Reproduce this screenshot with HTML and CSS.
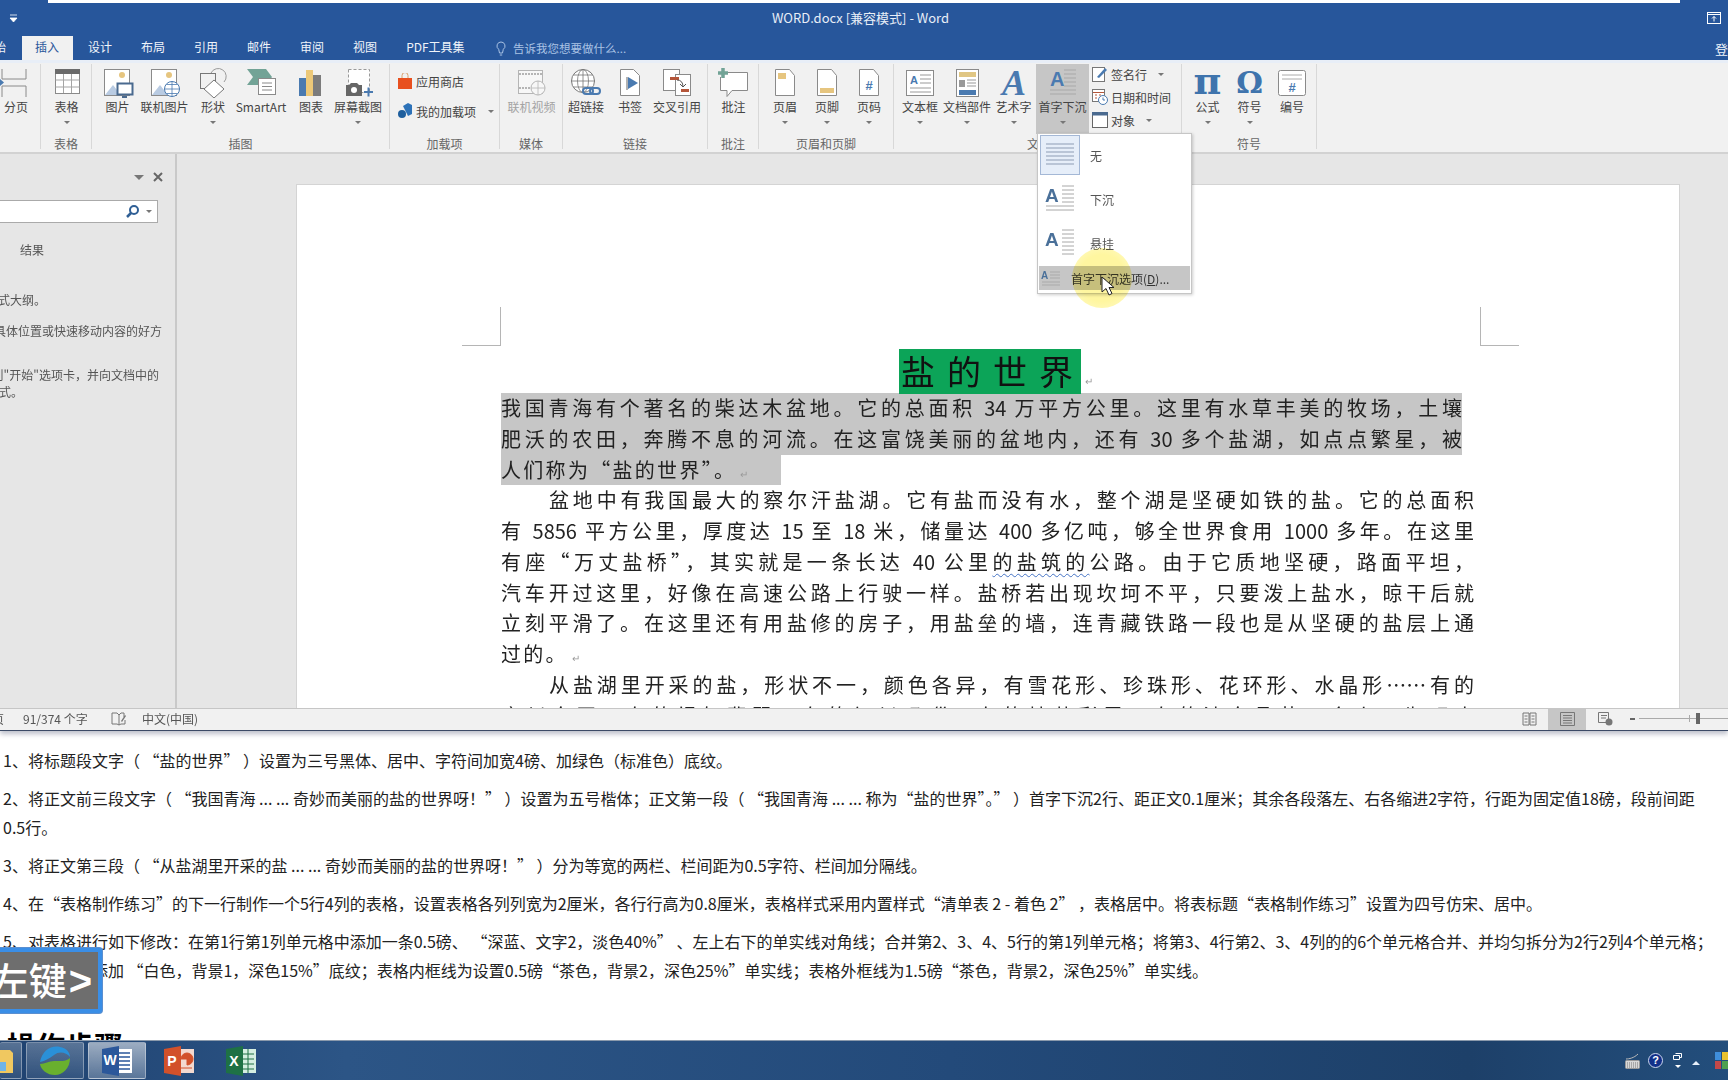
FILE: index.html
```html
<!DOCTYPE html>
<html lang="zh-CN">
<head>
<meta charset="utf-8">
<title>WORD.docx - Word</title>
<link rel="stylesheet" href="styles.css">
</head>
<body>
<div class="screen">
  <section class="word">
    <header class="titlebar">
      <div class="strip"></div>
      <div class="title-row">
        <svg class="qat" width="9" height="9" viewBox="0 0 9 9"><path d="M1 1h7M1 4h7L4.500 8z" fill="#fff" stroke="#fff" stroke-width=".8"/></svg>
        <span class="doc-title">WORD.docx [兼容模式] - Word</span>
        <svg class="restore" width="14" height="12" viewBox="0 0 14 12"><rect x=".5" y=".5" width="13" height="11" fill="none" stroke="#fff"/><path d="M.5 2.500h13" stroke="#fff"/><path d="M7 9.500V4.500M5 6.500l2-2 2 2" fill="none" stroke="#fff"/></svg>
      </div>
      <nav class="tabs">
        <span class="tab tab-first">开始</span>
        <span class="tab tab-active">插入</span>
        <span class="tab">设计</span>
        <span class="tab">布局</span>
        <span class="tab">引用</span>
        <span class="tab">邮件</span>
        <span class="tab">审阅</span>
        <span class="tab">视图</span>
        <span class="tab">PDF工具集</span>
        <span class="tellme">
          <svg width="10" height="15" viewBox="0 0 10 15"><path d="M5 1a4 4 0 0 0-2.300 7.300L3.500 12h3l.800-3.700A4 4 0 0 0 5 1zM3.800 14h2.400" fill="none" stroke="#a9c2e4" stroke-width="1"/></svg>
          告诉我您想要做什么...
        </span>
        <span class="login">登录</span>
      </nav>
    </header>

    <div class="ribbon">
      <div class="group g-pages">
        <div class="items">
          <div class="item w32">
            <svg class="ico" width="32" height="30" viewBox="0 0 32 30"><path d="M2 1v10h24V1M2 29V18h24v11" fill="none" stroke="#8a8a8a"/><path d="M0 11l4 3.500-4 3.500z" fill="#4a7ab0"/></svg>
            <span>分页</span>
          </div>
        </div>
        <div class="group-label"></div>
      </div>
      <div class="group g-table">
        <div class="items">
          <div class="item w51">
            <svg class="ico" width="32" height="30" viewBox="0 0 32 30"><rect x="4.500" y="1.500" width="24" height="24" fill="#fff" stroke="#8a8a8a"/><rect x="4" y="1" width="25" height="5" fill="#6b6b6b"/><path d="M4.500 12h24M4.500 19h24M12.500 6v19M20.500 6v19" stroke="#a5a5a5"/></svg>
            <span>表格</span><i class="arrow"></i>
          </div>
        </div>
        <div class="group-label">表格</div>
      </div>
      <div class="group g-illus">
        <div class="items">
          <div class="item w45">
            <svg class="ico" width="32" height="30" viewBox="0 0 32 30"><rect x="2.500" y="1.500" width="25" height="26" fill="#fff" stroke="#8a8a8a"/><circle cx="20" cy="7" r="3" fill="#e6c57f"/><path d="M3 27l8-10 8 10z" fill="#b9cbe2"/><rect x="15.500" y="15.500" width="15" height="11" fill="#fff" stroke="#4a6a8f" stroke-width="2"/><path d="M20 29h5" stroke="#4a6a8f" stroke-width="2"/></svg>
            <span>图片</span>
          </div>
          <div class="item w49">
            <svg class="ico" width="32" height="30" viewBox="0 0 32 30"><rect x="2.500" y="1.500" width="25" height="26" fill="#fff" stroke="#8a8a8a"/><circle cx="20" cy="7" r="3" fill="#e6c57f"/><path d="M3 27l8-10 8 10z" fill="#b9cbe2"/><circle cx="23" cy="21" r="7.500" fill="#fff" stroke="#4a7ab0"/><path d="M15.500 21h15M23 13.500v15M17.500 16.500h11M17.500 25.500h11" stroke="#4a7ab0" stroke-width=".8"/></svg>
            <span>联机图片</span>
          </div>
          <div class="item w48">
            <svg class="ico" width="32" height="30" viewBox="0 0 32 30"><rect x="3.500" y="5.500" width="15" height="15" fill="none" stroke="#777"/><path d="M14 5a8 8 0 1 1 13 9" fill="none" stroke="#9a9a9a"/><path d="M17 12l10 9-10 9-10-9z" fill="#fff" stroke="#777"/></svg>
            <span>形状</span><i class="arrow"></i>
          </div>
          <div class="item w48">
            <svg class="ico" width="32" height="30" viewBox="0 0 32 30"><path d="M2 1h19l6 8-6 8H2l6-8z" fill="#72a396"/><rect x="13.500" y="10.500" width="17" height="16" fill="#fff" stroke="#8a8a8a"/><path d="M17 15h10M17 18.500h10M17 22h10" stroke="#8a8a8a"/></svg>
            <span>SmartArt</span>
          </div>
          <div class="item w52">
            <svg class="ico" width="32" height="30" viewBox="0 0 32 30"><rect x="4" y="10" width="7" height="18" fill="#4a7ab0"/><rect x="11" y="2" width="7" height="26" fill="#ecc878"/><rect x="18" y="7" width="8" height="21" fill="#7c7c7c"/></svg>
            <span>图表</span>
          </div>
          <div class="item w42">
            <svg class="ico" width="32" height="30" viewBox="0 0 32 30"><rect x="6.500" y="1.500" width="21" height="23" fill="#fff" stroke="#999" stroke-dasharray="3 2"/><path d="M4 17h3l2-2h6l2 2h3v11H4z" fill="#666"/><circle cx="12" cy="22" r="3" fill="#fff"/><path d="M22 24h9M26.500 19.500v9" stroke="#4a7ab0" stroke-width="2"/></svg>
            <span>屏幕截图</span><i class="arrow"></i>
          </div>
        </div>
        <div class="group-label">插图</div>
      </div>
      <div class="group g-addins">
        <div class="items items-col">
          <div class="row-btn"><svg width="14" height="16" viewBox="0 0 14 16"><path d="M0 5h14v11H0z" fill="#e8501f"/><path d="M4 5V2.500a3 3 0 0 1 6 0V5" fill="none" stroke="#d9a06c"/></svg>应用商店</div>
          <div class="row-btn"><svg width="14" height="16" viewBox="0 0 14 16"><path d="M5 3l5-3 4 2v9l-4 2z" fill="#2d72b8"/><circle cx="4" cy="11" r="4" fill="#1f5f9e"/></svg>我的加载项<i class="arrow arrow-inline"></i></div>
        </div>
        <div class="group-label">加载项</div>
      </div>
      <div class="group g-media">
        <div class="items">
          <div class="item item-muted w63">
            <svg class="ico" width="32" height="30" viewBox="0 0 32 30"><rect x="2.500" y="2.500" width="24" height="23" fill="#f7f7f7" stroke="#b5b5b5"/><path d="M3 6h23M3 20h12" stroke="#b5b5b5" stroke-dasharray="2 1" stroke-width="2"/><circle cx="22" cy="20" r="7" fill="#f7f7f7" stroke="#b5b5b5"/><path d="M15 20h14M22 13v14" stroke="#b5b5b5" stroke-width=".8"/></svg>
            <span>联机视频</span>
          </div>
        </div>
        <div class="group-label">媒体</div>
      </div>
      <div class="group g-links">
        <div class="items">
          <div class="item w42">
            <svg class="ico" width="32" height="30" viewBox="0 0 32 30"><circle cx="13" cy="13" r="11.500" fill="#fff" stroke="#777"/><path d="M1.500 13h23M13 1.500v23M3.500 7h19M3.500 19h19" stroke="#777" stroke-width=".8"/><ellipse cx="13" cy="13" rx="5.500" ry="11.500" fill="none" stroke="#777" stroke-width=".8"/><rect x="13" y="20" width="10" height="6" rx="3" fill="none" stroke="#4a7ab0" stroke-width="2"/><rect x="20" y="20" width="10" height="6" rx="3" fill="none" stroke="#4a7ab0" stroke-width="2"/></svg>
            <span>超链接</span>
          </div>
          <div class="item w46">
            <svg class="ico" width="32" height="30" viewBox="0 0 32 30"><path d="M6.500 1.500h13l6 6v20h-19z" fill="#fff" stroke="#8a8a8a"/><path d="M13 9v13" stroke="#666"/><path d="M14 9l10 6-10 6z" fill="#4a7ab0"/></svg>
            <span>书签</span>
          </div>
          <div class="item w48">
            <svg class="ico" width="32" height="30" viewBox="0 0 32 30"><rect x="2.500" y="1.500" width="16" height="21" fill="#fff" stroke="#8a8a8a"/><rect x="14.500" y="6.500" width="15" height="21" fill="#fff" stroke="#8a8a8a"/><rect x="9" y="9" width="9" height="3" fill="#b5563a"/><rect x="20" y="21" width="8" height="3" fill="#b5563a"/><path d="M16 12q6 0 6 7M19 16l3 3 3-3" fill="none" stroke="#555"/></svg>
            <span>交叉引用</span>
          </div>
        </div>
        <div class="group-label">链接</div>
      </div>
      <div class="group g-comment">
        <div class="items">
          <div class="item w51">
            <svg class="ico" width="32" height="30" viewBox="0 0 32 30"><path d="M6.500 4.500h23v18H14l-5 6v-6H2.500V9" fill="#fff" stroke="#8a8a8a"/><path d="M5 0v10M0 5h10" stroke="#72a396" stroke-width="3.500"/></svg>
            <span>批注</span>
          </div>
        </div>
        <div class="group-label">批注</div>
      </div>
      <div class="group g-header">
        <div class="items">
          <div class="item w42">
            <svg class="ico" width="32" height="30" viewBox="0 0 32 30"><path d="M6.500 1.500h14l5 6v20h-19z" fill="#fff" stroke="#8a8a8a"/><rect x="9" y="5" width="8" height="6" fill="#e6c57f"/></svg>
            <span>页眉</span><i class="arrow"></i>
          </div>
          <div class="item w42">
            <svg class="ico" width="32" height="30" viewBox="0 0 32 30"><path d="M6.500 1.500h14l5 6v20h-19z" fill="#fff" stroke="#8a8a8a"/><rect x="9" y="20" width="14" height="5" fill="#e6c57f"/></svg>
            <span>页脚</span><i class="arrow"></i>
          </div>
          <div class="item w42">
            <svg class="ico" width="32" height="30" viewBox="0 0 32 30"><path d="M6.500 1.500h14l5 6v20h-19z" fill="#fff" stroke="#8a8a8a"/><text x="16" y="22" text-anchor="middle" class="svg-hash">#</text></svg>
            <span>页码</span><i class="arrow"></i>
          </div>
        </div>
        <div class="group-label">页眉和页脚</div>
      </div>
      <div class="group g-text">
        <div class="items">
          <div class="item w46">
            <svg class="ico" width="32" height="30" viewBox="0 0 32 30"><rect x="2.500" y="2.500" width="27" height="25" fill="#fff" stroke="#8a8a8a"/><text x="6" y="16" class="svg-a-small">A</text><path d="M16 7h11M16 11h11M16 15h11M6 20h21M6 24h21" stroke="#999"/></svg>
            <span>文本框</span><i class="arrow"></i>
          </div>
          <div class="item w48">
            <svg class="ico" width="32" height="30" viewBox="0 0 32 30"><rect x="5.500" y="1.500" width="22" height="27" fill="#fff" stroke="#8a8a8a"/><rect x="8" y="4" width="17" height="5" fill="#e0c683"/><rect x="8" y="12" width="6" height="7" fill="#999"/><path d="M16 12h9M16 15h9M16 18h9" stroke="#999"/><rect x="8" y="22" width="17" height="5" fill="#4a7ab0"/></svg>
            <span>文档部件</span><i class="arrow"></i>
          </div>
          <div class="item w45">
            <svg class="ico" width="32" height="30" viewBox="0 0 32 30"><text x="16" y="27" text-anchor="middle" class="svg-wordart">A</text></svg>
            <span>艺术字</span><i class="arrow"></i>
          </div>
          <div class="item item-on w53">
            <svg class="ico" width="32" height="30" viewBox="0 0 32 30"><text x="3" y="18" class="svg-a">A</text><path d="M17 2h12M17 6h12M17 10h12M17 14h12M17 18h12M3 22h26M3 26h26" stroke="#a8a8a8"/></svg>
            <span>首字下沉</span><i class="arrow"></i>
          </div>
          <div class="stack">
            <div class="row-btn small"><svg width="16" height="16" viewBox="0 0 16 16"><rect x=".5" y="1.500" width="12" height="14" fill="#fff" stroke="#777"/><path d="M5 11l8-9 2 2-8 8z" fill="#4a7ab0"/></svg>签名行<i class="arrow arrow-inline"></i></div>
            <div class="row-btn small"><svg width="16" height="16" viewBox="0 0 16 16"><rect x=".5" y=".5" width="12" height="12" fill="#fff" stroke="#777"/><path d="M1 3.500h11M3 6h2M7 6h2M3 9h2" stroke="#b5563a"/><circle cx="11" cy="11" r="4.500" fill="#fff" stroke="#4a7ab0"/><path d="M11 8.500V11h2" fill="none" stroke="#4a7ab0"/></svg>日期和时间</div>
            <div class="row-btn small"><svg width="16" height="16" viewBox="0 0 16 16"><rect x=".5" y=".5" width="15" height="15" fill="#fff" stroke="#666"/><rect x="0" y="0" width="16" height="3.500" fill="#4a6a8f"/></svg>对象<i class="arrow arrow-inline"></i></div>
          </div>
        </div>
        <div class="group-label">文本</div>
      </div>
      <div class="group g-symbol">
        <div class="items">
          <div class="item w41">
            <span class="glyph glyph-pi">π</span>
            <span>公式</span><i class="arrow"></i>
          </div>
          <div class="item w43">
            <span class="glyph">Ω</span>
            <span>符号</span><i class="arrow"></i>
          </div>
          <div class="item w42">
            <svg class="ico" width="32" height="30" viewBox="0 0 32 30"><rect x="2.500" y="2.500" width="27" height="25" rx="2" fill="#fff" stroke="#8a8a8a"/><path d="M6 7h20M6 11h20" stroke="#aaa"/><text x="16" y="24" text-anchor="middle" class="svg-hash">#</text></svg>
            <span>编号</span>
          </div>
        </div>
        <div class="group-label">符号</div>
      </div>
    </div>

    <div class="workspace">
      <aside class="nav-pane">
        <div class="nav-head">
          <i class="nav-arrow"></i>
          <svg width="12" height="12" viewBox="0 0 12 12"><path d="M2 2l8 8M10 2l-8 8" stroke="#666" stroke-width="2"/></svg>
        </div>
        <div class="nav-search">
          <svg width="15" height="15" viewBox="0 0 15 15"><circle cx="9" cy="6" r="4" fill="none" stroke="#2f5f95" stroke-width="2"/><path d="M6 9l-4 4" stroke="#2f5f95" stroke-width="2.500"/></svg>
          <i class="nav-arrow nav-arrow-small"></i>
        </div>
        <div class="nav-tab">结果</div>
        <div class="nav-line nav-a">创建交互式大纲。</div>
        <div class="nav-line nav-b">它是跟踪您在文档中的具体位置或快速移动内容的好方</div>
        <div class="nav-line nav-c">要开始，请转到"开始"选项卡，并向文档中的</div>
        <div class="nav-line nav-d">应用标题样式。</div>
      </aside>
      <main class="canvas">
        <article class="page">
          <div class="crops">
            <i class="crop crop-l"></i>
            <i class="crop crop-r"></i>
          </div>
          <div class="page-title"><span class="title-text">盐的世界</span><span class="mark">↵</span></div>
          <div class="line sel">我国青海有个著名的柴达木盆地。它的总面积 34 万平方公里。这里有水草丰美的牧场，土壤</div>
          <div class="line sel">肥沃的农田，奔腾不息的河流。在这富饶美丽的盆地内，还有 30 多个盐湖，如点点繁星，被</div>
          <div class="line-last sel sel-end">人们称为“盐的世界”。<span class="mark">↵</span></div>
          <div class="line wide indent">盆地中有我国最大的察尔汗盐湖。它有盐而没有水，整个湖是坚硬如铁的盐。它的总面积</div>
          <div class="line wide">有 5856 平方公里，厚度达 15 至 18 米，储量达 400 多亿吨，够全世界食用 1000 多年。在这里</div>
          <div class="line wide">有座“万丈盐桥”，其实就是一条长达 40 公里<span class="wavy">的盐筑的</span>公路。由于它质地坚硬，路面平坦，</div>
          <div class="line wide">汽车开过这里，好像在高速公路上行驶一样。盐桥若出现坎坷不平，只要泼上盐水，晾干后就</div>
          <div class="line wide">立刻平滑了。在这里还有用盐修的房子，用盐垒的墙，连青藏铁路一段也是从坚硬的盐层上通</div>
          <div class="line-last">过的。<span class="mark">↵</span></div>
          <div class="line wide indent">从盐湖里开采的盐，形状不一，颜色各异，有雪花形、珍珠形、花环形、水晶形……有的</div>
          <div class="line wide">亮似白玉，有的绿如翡翠，有的红似玛瑙，有的灿若彩霞，有的洁白晶莹，令人叹为观止</div>
        </article>
      </main>
    </div>

    <footer class="statusbar">
      <span class="st-page">页</span>
      <span class="st-count">91/374 个字</span>
      <svg class="st-proof" width="16" height="14" viewBox="0 0 16 14"><path d="M1 1h5l2 2v10l-2-1H1zM8 3l2-2h3v4M8 13l2-1h4V8" fill="none" stroke="#777"/><path d="M10 9l4-6 1 1-4 6z" fill="#777"/></svg>
      <span class="st-lang">中文(中国)</span>
      <div class="views">
        <span class="view">
          <svg width="15" height="14" viewBox="0 0 15 14"><path d="M1 1h6v12H1zM8 1h6v12H8zM2.500 4h3M2.500 7h3M2.500 10h3M9.500 4h3M9.500 7h3M9.500 10h3" fill="none" stroke="#777"/></svg>
        </span>
        <span class="view view-on">
          <svg width="15" height="14" viewBox="0 0 15 14"><path d="M.5.500h14v13H.5zM3 3.500h9M3 6h9M3 8.500h9M3 11h9" fill="none" stroke="#777"/></svg>
        </span>
        <span class="view">
          <svg width="15" height="14" viewBox="0 0 15 14"><path d="M.5.500h10v10H.5zM3 3.500h6M3 6h5" fill="none" stroke="#777"/><circle cx="11" cy="10" r="3.500" fill="#777"/></svg>
        </span>
      </div>
      <div class="zoom">
        <i class="zoom-minus"></i>
        <div class="zoom-track"><i class="zoom-tick"></i><i class="zoom-thumb"></i></div>
      </div>
    </footer>

    <div class="dropdown">
      <div class="dd-item dd-none">
        <span class="dd-thumb dd-thumb-on">
          <svg width="30" height="30" viewBox="0 0 30 30"><path d="M1 4h28M1 8h28M1 12h28M1 16h28M1 20h28M1 24h28" stroke="#8d9cb4"/></svg>
        </span>
        <span>无</span>
      </div>
      <div class="dd-item dd-drop">
        <span class="dd-thumb">
          <svg width="30" height="30" viewBox="0 0 30 30"><text x="0" y="18" class="svg-a-dd">A</text><path d="M17 2h12M17 6h12M17 10h12M17 14h12M17 18h12M1 22h28M1 26h28" stroke="#a8a8a8"/></svg>
        </span>
        <span>下沉</span>
      </div>
      <div class="dd-item dd-hang">
        <span class="dd-thumb">
          <svg width="30" height="30" viewBox="0 0 30 30"><text x="0" y="18" class="svg-a-dd">A</text><path d="M17 2h12M17 6h12M17 10h12M17 14h12M17 18h12M17 22h12M17 26h12" stroke="#a8a8a8"/></svg>
        </span>
        <span>悬挂</span>
      </div>
      <div class="dd-option">
        <svg width="20" height="18" viewBox="0 0 20 18"><text x="0" y="10" class="svg-a-tiny">A</text><path d="M9 3h10M9 6h10M9 9h10M1 13h18M1 16h18" stroke="#aaa"/></svg>
        <span>首字下沉选项(<u>D</u>)...</span>
      </div>
    </div>
    <div class="halo"></div>
    <svg class="cursor" width="14" height="20" viewBox="0 0 14 20"><path d="M1 1v15l4-3.500L8 19l3-1.500-3-6h5z" fill="#fff" stroke="#222"/></svg>
  </section>

  <section class="below">
    <p>1、将标题段文字（ “盐的世界” ）设置为三号黑体、居中、字符间加宽4磅、加绿色（标准色）底纹。</p>
    <p>2、将正文前三段文字（ “我国青海 ... ... 奇妙而美丽的盐的世界呀！” ）设置为五号楷体；正文第一段（ “我国青海 ... ... 称为“盐的世界”。” ）首字下沉2行、距正文0.1厘米；其余各段落左、右各缩进2字符，行距为固定值18磅，段前间距<br>0.5行。</p>
    <p>3、将正文第三段（ “从盐湖里开采的盐 ... ... 奇妙而美丽的盐的世界呀！” ）分为等宽的两栏、栏间距为0.5字符、栏间加分隔线。</p>
    <p>4、在“表格制作练习”的下一行制作一个5行4列的表格，设置表格各列列宽为2厘米，各行行高为0.8厘米，表格样式采用内置样式“清单表 2 - 着色 2” ，表格居中。将表标题“表格制作练习”设置为四号仿宋、居中。</p>
    <p>5、对表格进行如下修改：在第1行第1列单元格中添加一条0.5磅、 “深蓝、文字2，淡色40%” 、左上右下的单实线对角线；合并第2、3、4、5行的第1列单元格；将第3、4行第2、3、4列的的6个单元格合并、并均匀拆分为2行2列4个单元格；<br>将表格第1行添加 “白色，背景1，深色15%”底纹；表格内框线为设置0.5磅“茶色，背景2，深色25%”单实线；表格外框线为1.5磅“茶色，背景2，深色25%”单实线。</p>
    <h2>操作步骤</h2>
    <div class="keycap"><span>左键<b>&gt;</b></span></div>
  </section>

  <footer class="taskbar">
    <div class="tb-btn tb-first">
      <svg width="16" height="26" viewBox="0 0 16 26"><path d="M0 2h10l3 3v20H0z" fill="#f0c860"/><rect x="0" y="14" width="6" height="9" fill="#6fb4e6"/></svg>
    </div>
    <div class="tb-btn">
      <svg width="34" height="32" viewBox="0 0 34 32"><path d="M2 17C4 6 13 0 22 2c6 1 10 5 10 10-4-5-11-6-16-2-4 3-9 6-14 7z" fill="#2a90d8"/><path d="M2 19c5 0 9-3 14-3 6 0 12 1 16-3 0 10-7 17-15 17C9 30 3 25 2 19z" fill="#69b02e"/></svg>
    </div>
    <div class="tb-btn tb-on">
      <svg width="32" height="32" viewBox="0 0 32 32"><rect x="14" y="4" width="17" height="24" fill="#fff"/><path d="M17 8h12M17 12h12M17 16h12M17 20h12M17 24h12" stroke="#2b579a" stroke-width="1.500"/><path d="M1 4l17-3v30L1 28z" fill="#2b579a"/><text x="9" y="20" text-anchor="middle" class="svg-tb">W</text></svg>
    </div>
    <div class="tb-app tb-ppt">
      <svg width="32" height="32" viewBox="0 0 32 32"><rect x="14" y="4" width="17" height="24" fill="#f3d9cf"/><path d="M18 14a6 6 0 1 1 6 6v-6zM18 23h11" fill="#d2512a" stroke="#d2512a"/><path d="M1 4l17-3v30L1 28z" fill="#d2512a"/><text x="9" y="21" text-anchor="middle" class="svg-tb">P</text></svg>
    </div>
    <div class="tb-app tb-xls">
      <svg width="32" height="32" viewBox="0 0 32 32"><rect x="14" y="4" width="17" height="24" fill="#d5efe1"/><path d="M17 9h12M17 14h12M17 19h12M17 24h12M23 4v24" stroke="#1e7145"/><path d="M1 4l17-3v30L1 28z" fill="#1e7145"/><text x="9" y="21" text-anchor="middle" class="svg-tb">X</text></svg>
    </div>
    <div class="tray">
      <svg class="tr-kbd" width="15" height="16" viewBox="0 0 15 16"><path d="M1 6c3 0 8-1 12-5" fill="none" stroke="#bbb"/><rect x=".5" y="7.500" width="14" height="8" rx="1" fill="#d8d8d8" stroke="#999"/><path d="M2 10h11M2 12h11M2 14h11" stroke="#777" stroke-dasharray="1 1"/></svg>
      <span class="tr-help">?</span>
      <span class="tr-restore"><svg width="9" height="7" viewBox="0 0 9 7"><path d="M2.500.500h6v4h-2M.500 2.500h6v4h-6z" fill="none" stroke="#fff"/></svg><i></i></span>
      <i class="tr-up"></i>
      <svg class="tr-flag" width="13" height="18" viewBox="0 0 13 18"><rect x="0" y="0" width="6" height="8" fill="#3f8edb"/><rect x="7" y="0" width="6" height="8" fill="#e8c12e"/><rect x="0" y="9" width="6" height="8" fill="#c44848"/><rect x="7" y="9" width="6" height="8" fill="#4fa04f"/></svg>
    </div>
  </footer>
</div>
</body>
</html>
```
FILE: styles.css
```css
* { box-sizing: border-box; }
html, body { margin: 0; height: 100%; overflow: hidden; }
body { font-family: "Noto Sans CJK SC", "Noto Sans", sans-serif; background: #fff; color: #333; }
.screen { width: 1728px; height: 1080px; display: flex; flex-direction: column; overflow: hidden; position: relative; }

/* Word window */
.word { height: 731px; flex: none; display: flex; flex-direction: column; position: relative; z-index: 2; border-bottom: 1px solid #3b4a66; box-shadow: 0 3px 5px rgba(60,70,100,.35); background: #e6e6e6; }
.titlebar { height: 60px; flex: none; background: #27569b; color: #fff; display: flex; flex-direction: column; overflow: hidden; }
.strip { height: 3px; margin: 0 48px; background: #fff; flex: none; }
.title-row { height: 33px; flex: none; display: flex; align-items: center; position: relative; padding-left: 9px; }
.qat { flex: none; margin-top: -3px; }
.doc-title { margin-left: 754px; font-size: 13px; margin-top: -4px; color: #e8eef7; white-space: nowrap; width: 180px; }
.restore { margin-left: auto; margin-right: 7px; margin-top: -3px; }
.tabs { height: 24px; flex: none; display: flex; align-items: center; font-size: 12px; color: #f0f4fa; }
.tab { padding: 0 14.500px; height: 24px; line-height: 22px; white-space: nowrap; flex: none; }
.tab-first { margin-left: -32.500px; }
.tab-active { background: #f1f1f1; color: #2b579a; padding: 0 13.500px; margin: 0 1px; }
.tellme { flex: 1; display: flex; align-items: center; gap: 7px; color: #a9c2e4; font-size: 11.500px; margin-left: 17px; }
.login { flex: none; margin-right: -13px; font-size: 13px; }

/* Ribbon */
.ribbon { height: 94px; flex: none; background: #f1f1f1; border-top: 3px solid #e8eef7; border-bottom: 2px solid #d2d2d2; display: flex; align-items: stretch; }
.group { flex: none; display: flex; flex-direction: column; position: relative; border-right: 1px solid #d8d8d8; margin: 1px 0 3px; }
.items { flex: none; height: 70px; display: flex; }
.items-col { flex-direction: column; padding: 8px 0 0 8px; gap: 10px; }
.group-label { flex: 1; text-align: center; font-size: 12px; color: #666; line-height: 16px; padding-top: 2px; }
.g-pages { width: 41px; }
.g-table { width: 51px; }
.g-illus { width: 298px; padding-left: 3px; }
.g-illus .group-label { margin-left: -3px; }
.g-addins { width: 110px; }
.g-addins .items-col { padding-top: 7px; }
.g-media { width: 63px; }
.g-links { width: 145px; padding-left: 2px; }
.g-links .group-label { margin-left: -2px; }
.g-comment { width: 51px; }
.g-header { width: 135px; padding-left: 5px; }
.g-header .group-label { margin-left: -5px; }
.g-text { width: 288px; padding-left: 3px; }
.g-symbol { width: 135px; padding-left: 5px; }
.g-symbol .group-label { margin-left: -5px; }

.item { display: flex; flex-direction: column; align-items: center; flex: none; height: 70px; padding-top: 4px; font-size: 12px; color: #444; white-space: nowrap; position: relative; }
.item > span:not(.glyph) { line-height: 16px; margin-top: 1px; }
.ico { flex: none; display: block; }
.w32 { width: 32px; } .w41 { width: 41px; } .w42 { width: 42px; } .w43 { width: 43px; }
.w45 { width: 45px; } .w46 { width: 46px; } .w48 { width: 48px; } .w49 { width: 49px; } .w51 { width: 51px; }
.w52 { width: 52px; } .w53 { width: 53px; } .w63 { width: 63px; }
.item-muted { color: #a3a3a3; }
.item-on { background: #c6c6c6; }
.arrow { display: block; width: 0; height: 0; border-left: 3px solid transparent; border-right: 3px solid transparent; border-top: 3px solid #777; margin-top: 6px; }
.arrow-inline { margin: 0 0 0 8px; }
.row-btn { display: flex; align-items: center; gap: 4px; font-size: 12px; color: #444; white-space: nowrap; height: 20px; }
.row-btn.small { gap: 3px; height: 18px; }
.stack { display: flex; flex-direction: column; gap: 5px; padding: 1px 0 0 3px; }
.glyph { height: 30px; line-height: 30px; font-family: "DejaVu Serif", serif; font-weight: 700; font-size: 30px; color: #3f74ad; flex: none; }
.glyph-pi { font-size: 38px; line-height: 26px; }
.svg-hash { font: 700 13px "Liberation Sans", sans-serif; fill: #4a7ab0; }
.svg-a-small { font: 700 11px "Liberation Sans", sans-serif; fill: #4a7ab0; }
.svg-a { font: 700 20px "Liberation Sans", sans-serif; fill: #4a7ab0; }
.svg-a-dd { font: 700 19px "Liberation Sans", sans-serif; fill: #4a7099; }
.svg-a-tiny { font: 700 10px "Liberation Sans", sans-serif; fill: #4a7099; }
.svg-wordart { font: italic 700 36px "Liberation Serif", serif; fill: #4a7ab0; }
.svg-tb { font: 700 14px "Liberation Sans", sans-serif; fill: #fff; }

/* Workspace */
.workspace { flex: 1; min-height: 0; display: flex; overflow: hidden; }
.nav-pane { width: 177px; flex: none; background: #e6e6e6; border-right: 2px solid #c9c9c9; font-size: 12px; color: #555; }
.nav-head { display: flex; align-items: center; justify-content: flex-end; gap: 8px; padding: 0 11px 0 0; height: 46px; }
.nav-arrow { display: block; width: 0; height: 0; border-left: 5px solid transparent; border-right: 5px solid transparent; border-top: 5px solid #777; }
.nav-arrow-small { border-width: 3px 3px 0; }
.nav-search { width: 158px; height: 23px; background: #fff; border: 1px solid #aaa; border-left: 0; display: flex; align-items: center; justify-content: flex-end; gap: 6px; padding-right: 5px; }
.nav-tab { padding-left: 20px; height: 16px; line-height: 16px; margin-top: 19px; }
.nav-line { display: flex; justify-content: flex-end; width: 162px; white-space: nowrap; height: 18px; line-height: 18px; }
.nav-a { width: 46px; margin-top: 33px; }
.nav-b { margin-top: 13px; }
.nav-c { width: 159px; margin-top: 26px; }
.nav-d { width: 23px; margin-top: -1px; }
.canvas { flex: 1; min-width: 0; padding: 30px 48px 0 119px; overflow: hidden; }
.page { width: 1384px; height: 560px; background: #fff; border: 1px solid #d4d4d4; border-bottom: 0; padding: 0 205px 0 204px; font-size: 20px; color: #222; overflow: hidden; }
.crops { display: flex; justify-content: space-between; width: 1057px; margin: 122px 0 2px -39px; }
.crop { display: block; width: 39px; height: 39px; border-bottom: 1px solid #b5b5b5; }
.crop-l { border-right: 1px solid #b5b5b5; }
.crop-r { border-left: 1px solid #b5b5b5; }
.page-title { width: 976px; height: 45px; text-align: center; line-height: 45px; font-size: 34px; padding-left: 14px; position: relative; }
.title-text { display: inline-block; width: 182px; height: 45px; background: #0ca458; color: #111; letter-spacing: 12px; padding-left: 2px; white-space: nowrap; line-height: 44px; text-align: left; }
.mark { font-size: 10px; color: #999; margin-left: 4px; letter-spacing: 0; }
.line, .line-last { height: 30.750px; line-height: 30.750px; white-space: nowrap; }
.line { width: 961px; text-align: justify; text-align-last: justify; }
.line.wide { width: 973px; }
.indent { padding-left: 48px; }
.line-last { width: 973px; letter-spacing: 2.300px; }
.sel { background: #c6c6c6; }
.sel-end { width: 280px; }
.wavy { text-decoration: underline wavy #4472c4 1px; text-underline-offset: 3px; }

/* Status bar */
.statusbar { height: 22px; flex: none; background: #f1f1f1; border-top: 1px solid #c6c6c6; display: flex; align-items: center; font-size: 12px; color: #555; position: relative; padding-bottom: 2px; }
.st-page { margin-left: -8px; width: 31px; flex: none; }
.st-count { width: 88px; flex: none; }
.st-proof { flex: none; }
.st-lang { margin-left: 15px; }
.views { margin-left: auto; display: flex; align-items: stretch; height: 21px; margin-bottom: -2px; }
.view { width: 38px; display: flex; align-items: center; justify-content: center; padding-bottom: 2px; }
.view-on { background: #c6c6c6; }
.zoom { width: 104px; flex: none; display: flex; align-items: center; padding-left: 6px; gap: 4px; }
.zoom-minus { display: block; width: 5px; height: 2px; background: #666; flex: none; }
.zoom-track { flex: 1; height: 1px; background: #aaa; position: relative; }
.zoom-tick { position: absolute; left: 50px; top: -3px; width: 1px; height: 7px; background: #aaa; }
.zoom-thumb { position: absolute; left: 57px; top: -5px; width: 4px; height: 11px; background: #666; }

/* Dropdown */
.dropdown { position: absolute; left: 1037px; top: 133px; width: 155px; height: 161px; background: #fff; border: 1px solid #c6c6c6; box-shadow: 1px 1px 3px rgba(0,0,0,.2); z-index: 3; font-size: 12px; color: #555; padding: 1px 1px 0; }
.dd-item { display: flex; align-items: center; gap: 10px; padding-left: 1px; }
.dd-none { height: 40px; margin-bottom: 4px; }
.dd-drop { height: 40px; margin-bottom: 4px; }
.dd-hang { height: 40px; margin-bottom: 2px; }
.dd-thumb { width: 40px; height: 40px; flex: none; display: flex; align-items: center; justify-content: center; border: 1px solid transparent; }
.dd-thumb-on { background: #e6eef9; border-color: #a4b8d6; }
.dd-option { height: 25px; background: #c6c6c6; border-top: 1px solid #fff; display: flex; align-items: center; gap: 10px; padding-left: 2px; color: #333; white-space: nowrap; width: 151px; }
.halo { position: absolute; left: 1072px; top: 248px; width: 60px; height: 60px; border-radius: 50%; background: radial-gradient(circle, #fff6a0 55%, #fffbd0 100%); mix-blend-mode: multiply; z-index: 4; }
.cursor { position: absolute; left: 1101px; top: 276px; z-index: 5; }

/* Lower document */
.below { flex: 1; min-height: 0; position: relative; padding: 15px 0 0 3px; font-size: 16px; color: #222; overflow: hidden; background: #fff; }
.below p { margin: 0 0 9px; line-height: 29px; white-space: nowrap; }
.below h2 { margin: 40px 0 0 4px; font-size: 29px; line-height: 40px; color: #000; font-weight: 700; }
.keycap { position: absolute; left: -6px; top: 217px; width: 108px; height: 65px; background: #6e6e6e; border: 4px solid #3a8ee6; border-radius: 3px; display: flex; align-items: center; justify-content: flex-end; overflow: hidden; padding-right: 6px; box-shadow: 0 0 0 1px #5a8fd0; }
.keycap span { color: #fff; font-size: 38px; font-weight: 500; line-height: 1; white-space: nowrap; flex: none; }
.keycap b { font: 700 40px/1 "Liberation Sans", sans-serif; margin-left: 2px; }

/* Taskbar */
.taskbar { height: 40px; flex: none; position: relative; z-index: 3; background: linear-gradient(90deg, #1f4270 0%, #2c5586 20%, #234a7a 55%, #1d4069 85%, #234e7c 100%); border-top: 1px solid #8b9aac; display: flex; align-items: center; }
.tb-btn { width: 58px; height: 37px; margin-right: 4px; flex: none; border: 1px solid rgba(255,255,255,.35); border-radius: 2px; background: linear-gradient(180deg, rgba(255,255,255,.25), rgba(255,255,255,.08)); display: flex; align-items: center; justify-content: center; }
.tb-first { width: 22px; justify-content: flex-start; border-left: 0; }
.tb-on { background: linear-gradient(180deg, rgba(255,255,255,.55), rgba(255,255,255,.25)); }
.tb-app { width: 32px; height: 32px; flex: none; }
.tb-ppt { margin-left: 13px; }
.tb-xls { margin-left: 30px; }
.tray { margin-left: auto; display: flex; align-items: center; height: 100%; }
.tr-help { width: 15px; height: 15px; margin-left: 8px; border-radius: 50%; background: #12308a; border: 1px solid #cfd8ee; color: #fff; font: 700 11px/13px "Liberation Sans", sans-serif; text-align: center; }
.tr-restore { margin-left: 10px; display: flex; flex-direction: column; align-items: center; gap: 5px; width: 9px; }
.tr-restore svg { display: block; }
.tr-restore i { display: block; width: 0; height: 0; border-left: 3px solid transparent; border-right: 3px solid transparent; border-top: 3px solid #fff; }
.tr-up { display: block; margin-left: 10px; width: 0; height: 0; border-left: 4px solid transparent; border-right: 4px solid transparent; border-bottom: 4px solid #e8f0fa; margin-top: 4px; }
.tr-flag { margin-left: 15px; }
```
